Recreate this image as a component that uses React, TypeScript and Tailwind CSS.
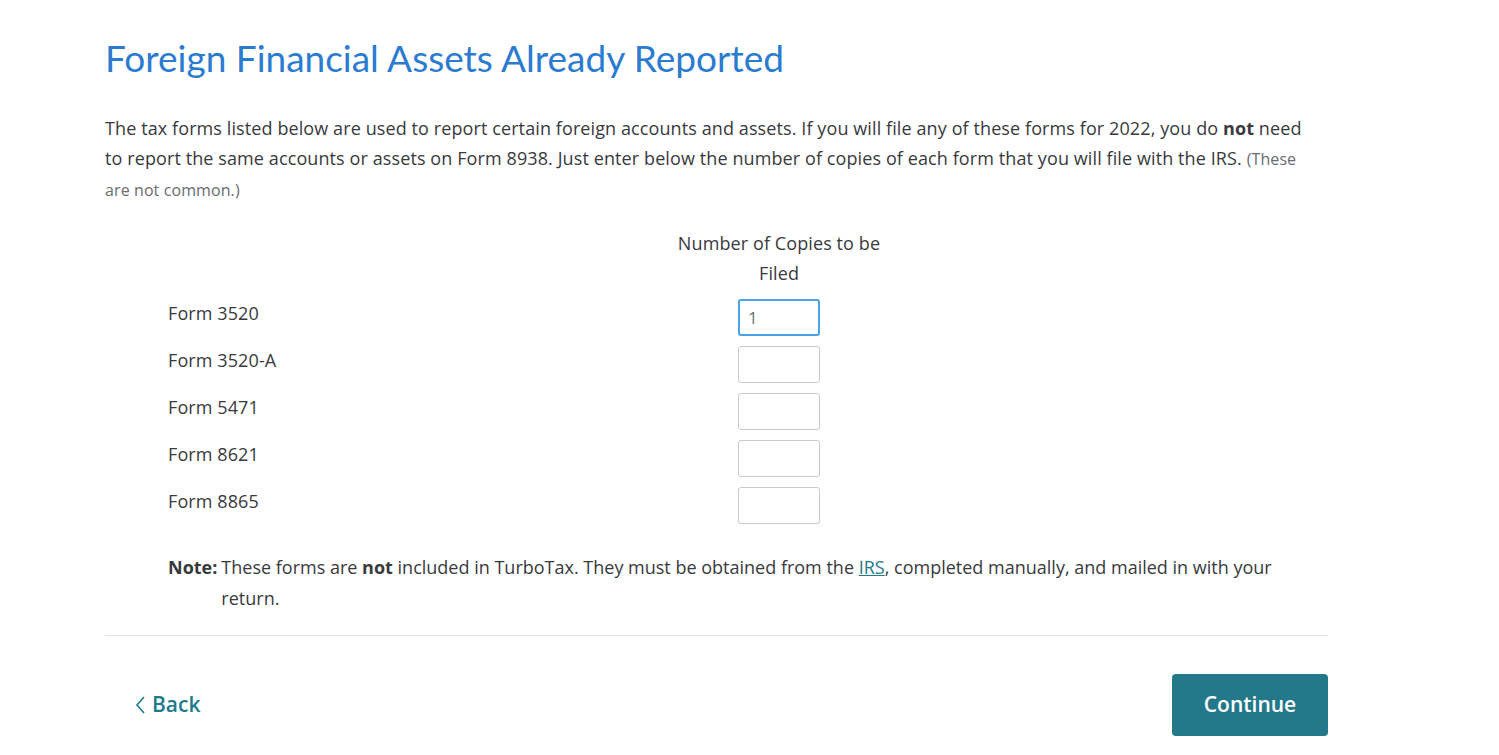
const forms = ["Form 3520", "Form 3520-A", "Form 5471", "Form 8621", "Form 8865"];

export default function App() {
  return (
    <div className="min-h-screen bg-white font-['Open_Sans',sans-serif] text-[#393a3d]">
      <div className="ml-[105px] w-[1223px] pt-[36px]">
        <h1 className="font-['Lato',sans-serif] text-[37px] leading-[44px] text-[#2b7bd0]">
          Foreign Financial Assets Already Reported
        </h1>

        <p className="mt-[33px] whitespace-nowrap text-[18px] leading-[30px] tracking-[0.1px]">
          The tax forms listed below are used to report certain foreign accounts and assets. If you will file any of these
          forms for 2022, you do <b>not</b> need
          <br />
          to report the same accounts or assets on Form 8938. Just enter below the number of copies of each form that you
          will file with the IRS. <span className="text-[16px] text-[#6b6c72]">(These</span>
          <br />
          <span className="text-[16px] text-[#6b6c72]">are not common.)</span>
        </p>

        <div className="mt-[23px] grid grid-cols-[501px_220px] pl-[63px] text-[18px] tracking-[0.1px]">
          <div />
          <div className="text-center leading-[30px]">
            Number of Copies to be
            <br />
            Filed
          </div>
          {forms.map((f, i) => (
            <div key={f} className="contents">
              <div className={`leading-[30px] ${i === 0 ? "mt-[10px]" : "mt-[9px]"}`}>{f}</div>
              <div className={`flex justify-center ${i === 0 ? "mt-[11px]" : "mt-[10px]"}`}>
                <input
                  defaultValue={i === 0 ? "1" : ""}
                  className={`h-[37px] w-[82px] rounded-[3px] border bg-white px-[8px] text-[17px] text-[#6b6c72] outline-none ${
                    i === 0 ? "border-2 border-[#4aa3e8]" : "border-[#c9cacc]"
                  }`}
                />
              </div>
            </div>
          ))}
        </div>

        <div className="mt-[28px] flex whitespace-nowrap pl-[63px] text-[18px] leading-[31px]">
          <b className="mr-[4px] shrink-0">Note:</b>
          <span>
            These forms are <b>not</b> included in TurboTax. They must be obtained from the{" "}
            <a href="#" className="text-[#1f7a8c] underline">
              IRS
            </a>
            , completed manually, and mailed in with your
            <br />
            return.
          </span>
        </div>

        <div className="mt-[21px] h-px bg-[#e6e6e6]" />

        <div className="mt-[38px] flex items-center justify-between">
          <button className="ml-[29px] flex items-center gap-[6px] text-[21px] font-semibold text-[#1f7a8c]">
            <svg width="12" height="20" viewBox="0 0 12 20" fill="none" stroke="currentColor" strokeWidth="1.6">
              <path d="M10 2 L3 10 L10 18" />
            </svg>
            Back
          </button>
          <button className="h-[62px] w-[156px] rounded-[4px] bg-[#23788a] text-[21px] font-semibold text-white">
            Continue
          </button>
        </div>
      </div>
    </div>
  );
}
